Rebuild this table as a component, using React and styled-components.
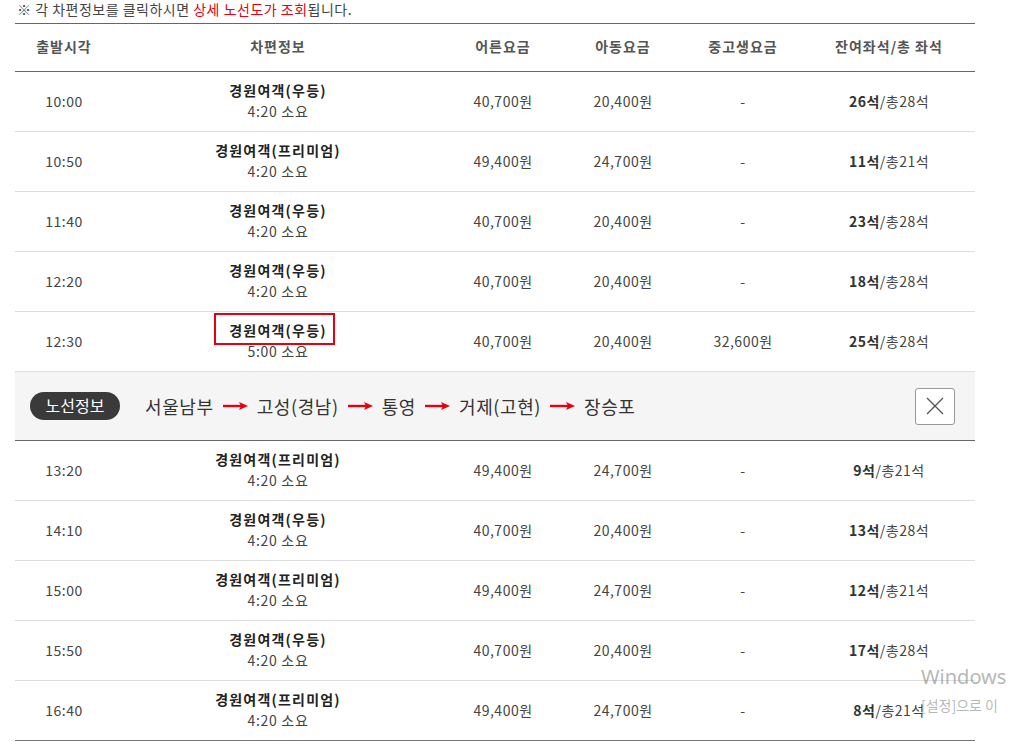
import React from "react";
import styled, { createGlobalStyle } from "styled-components";

const GlobalStyle = createGlobalStyle`
  html, body {
    margin: 0;
    padding: 0;
    background: #fff;
    overflow: hidden;
  }
  body {
    font-family: "Noto Sans CJK KR", "Noto Sans", sans-serif;
    color: #444;
  }
`;

// 전체 페이지
const Page = styled.div`
  position: relative;
  width: 1010px;
  height: 749px;
  padding: 0 0 0 15px;
  box-sizing: border-box;
  overflow: hidden;
`;

// 안내 문구
const Notice = styled.p`
  margin: 0;
  padding: 0 0 0 2px;
  height: 23px;
  line-height: 18px;
  font-size: 14px;
  color: #444;
  letter-spacing: 0.5px;
`;

const Red = styled.span`
  color: #e60012;
`;

// 시간표 테이블
const Table = styled.table`
  width: 960px;
  border-collapse: collapse;
  table-layout: fixed;
  border-top: 1px solid #666;
  border-bottom: 1px solid #777;
`;

const Th = styled.th`
  height: 44px;
  font-size: 14px;
  font-weight: 700;
  color: #555;
  text-align: center;
  border-bottom: 1px solid #666;
  padding: 0 0 3px;
  letter-spacing: 1px;
`;

const Row = styled.tr`
  border-bottom: ${(p) => (p.$last ? "none" : "1px solid #ddd")};
`;

const Td = styled.td`
  height: 57px;
  padding: 0 0 2px;
  text-align: center;
  font-size: 14px;
  color: #444;
  letter-spacing: 0.5px;
`;

const BusInfo = styled.div`
  display: flex;
  flex-direction: column;
  align-items: center;
  line-height: 21px;
`;

const BusName = styled.span`
  position: relative;
  font-weight: 700;
  color: #222;
  letter-spacing: 1.2px;
  &::after {
    content: "";
    display: ${(p) => (p.$selected ? "block" : "none")};
    position: absolute;
    top: -7px;
    bottom: -4px;
    left: -15px;
    right: -8px;
    border: 2px solid #e60012;
  }
`;

const Duration = styled.span`
  color: #444;
  letter-spacing: 0.7px;
`;

const Seat = styled.span`
  b {
    color: #333;
    font-weight: 700;
  }
`;

// 노선정보 패널
const RouteRow = styled.tr`
  background: #f5f5f5;
  border-top: 1px solid #666;
  border-bottom: 1px solid #666;
`;

const RouteCell = styled.td`
  height: 68px;
  padding: 0 20px 0 15px;
`;

const RouteBar = styled.div`
  display: flex;
  align-items: center;
`;

const RouteBadge = styled.span`
  display: inline-flex;
  align-items: center;
  justify-content: center;
  width: 90px;
  height: 28px;
  border-radius: 14px;
  background: #3a3a3a;
  color: #fff;
  font-size: 16px;
  margin-right: 25px;
  padding-bottom: 2px;
  box-sizing: border-box;
`;

const Stations = styled.div`
  display: flex;
  align-items: center;
  gap: 9px;
  font-size: 18px;
  letter-spacing: 0.6px;
  color: #333;
  flex: 1;
`;

const CloseButton = styled.button`
  width: 40px;
  height: 37px;
  border: 1px solid #999;
  border-radius: 3px;
  background: #fff;
  display: flex;
  align-items: center;
  justify-content: center;
  padding: 0;
  cursor: pointer;
`;

// 윈도우 정품 인증 워터마크
const Watermark = styled.div`
  position: absolute;
  left: 921px;
  top: 664px;
  color: rgba(120, 120, 120, 0.55);
  font-family: "Noto Sans", sans-serif;
  white-space: nowrap;
  pointer-events: none;
  div:first-child {
    font-size: 20px;
    line-height: 26px;
  }
  div:last-child {
    font-size: 14px;
    line-height: 22px;
    margin-top: 4px;
    font-family: "Noto Sans CJK KR", sans-serif;
  }
`;

const Arrow = () => (
  <svg width="25" height="10" viewBox="0 0 25 10">
    <line x1="0" y1="5" x2="18" y2="5" stroke="#e60012" strokeWidth="2.4" />
    <polygon points="16,1 25,5 16,9 18,5" fill="#e60012" />
  </svg>
);

const CloseIcon = () => (
  <svg width="18" height="18" viewBox="0 0 18 18">
    <line x1="1" y1="1" x2="17" y2="17" stroke="#555" strokeWidth="1.2" />
    <line x1="17" y1="1" x2="1" y2="17" stroke="#555" strokeWidth="1.2" />
  </svg>
);

const U = "경원여객(우등)";
const P = "경원여객(프리미엄)";

const schedules = [
  ["10:00", U, "4:20", "40,700원", "20,400원", "-", "26", "28"],
  ["10:50", P, "4:20", "49,400원", "24,700원", "-", "11", "21"],
  ["11:40", U, "4:20", "40,700원", "20,400원", "-", "23", "28"],
  ["12:20", U, "4:20", "40,700원", "20,400원", "-", "18", "28"],
  ["12:30", U, "5:00", "40,700원", "20,400원", "32,600원", "25", "28", true],
];

const schedules2 = [
  ["13:20", P, "4:20", "49,400원", "24,700원", "-", "9", "21"],
  ["14:10", U, "4:20", "40,700원", "20,400원", "-", "13", "28"],
  ["15:00", P, "4:20", "49,400원", "24,700원", "-", "12", "21"],
  ["15:50", U, "4:20", "40,700원", "20,400원", "-", "17", "28"],
  ["16:40", P, "4:20", "49,400원", "24,700원", "-", "8", "21"],
];

const stations = ["서울남부", "고성(경남)", "통영", "거제(고현)", "장승포"];

const ScheduleRow = ({ item, last }) => {
  const [time, name, dur, adult, child, teen, left, total, selected] = item;
  return (
    <Row $last={last}>
      <Td>{time}</Td>
      <Td>
        <BusInfo>
          <BusName $selected={selected}>{name}</BusName>
          <Duration>{dur} 소요</Duration>
        </BusInfo>
      </Td>
      <Td>{adult}</Td>
      <Td>{child}</Td>
      <Td>{teen}</Td>
      <Td>
        <Seat>
          <b>{left}석</b>/총{total}석
        </Seat>
      </Td>
    </Row>
  );
};

const App = () => {
  return (
    <Page>
      <GlobalStyle />
      <Notice>
        ※ 각 차편정보를 클릭하시면 <Red>상세 노선도가 조회</Red>됩니다.
      </Notice>
      <Table>
        <colgroup>
          <col style={{ width: 98 }} />
          <col style={{ width: 330 }} />
          <col style={{ width: 120 }} />
          <col style={{ width: 120 }} />
          <col style={{ width: 120 }} />
          <col style={{ width: 172 }} />
        </colgroup>
        <thead>
          <tr>
            <Th>출발시각</Th>
            <Th>차편정보</Th>
            <Th>어른요금</Th>
            <Th>아동요금</Th>
            <Th>중고생요금</Th>
            <Th>잔여좌석/총 좌석</Th>
          </tr>
        </thead>
        <tbody>
          {schedules.map((s) => (
            <ScheduleRow key={s[0]} item={s} />
          ))}
          <RouteRow>
            <RouteCell colSpan={6}>
              <RouteBar>
                <RouteBadge>노선정보</RouteBadge>
                <Stations>
                  {stations.map((st, i) => (
                    <React.Fragment key={st}>
                      {i > 0 && <Arrow />}
                      <span>{st}</span>
                    </React.Fragment>
                  ))}
                </Stations>
                <CloseButton aria-label="닫기">
                  <CloseIcon />
                </CloseButton>
              </RouteBar>
            </RouteCell>
          </RouteRow>
          {schedules2.map((s, i) => (
            <ScheduleRow key={s[0]} item={s} last={i === schedules2.length - 1} />
          ))}
        </tbody>
      </Table>
      <Watermark>
        <div>Windows</div>
        <div>[설정]으로 이</div>
      </Watermark>
    </Page>
  );
};

export default App;
